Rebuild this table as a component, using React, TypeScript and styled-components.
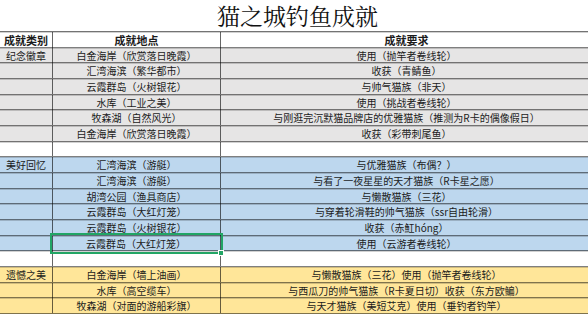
import styled, { createGlobalStyle } from "styled-components";

type Tone = "head" | "gray" | "blue" | "gold" | "blank";

type Line = {
  tone: Tone;
  cat?: string;
  place?: string;
  need?: string;
  selected?: boolean;
};

const fills: Record<Tone, string> = {
  head: "#ffffff",
  gray: "#e6e5e5",
  blue: "#bdd7ee",
  gold: "#ffe699",
  blank: "#ffffff",
};

const lines: Line[] = [
  { tone: "head", cat: "成就类别", place: "成就地点", need: "成就要求" },
  { tone: "gray", cat: "纪念徽章", place: "白金海岸（欣赏落日晚霞）", need: "使用（抛竿者卷线轮）" },
  { tone: "gray", place: "汇湾海滨（繁华都市）", need: "收获（青鲭鱼）" },
  { tone: "gray", place: "云霞群岛（火树银花）", need: "与帅气猫族（非天）" },
  { tone: "gray", place: "水库（工业之美）", need: "使用（挑战者卷线轮）" },
  { tone: "gray", place: "牧森湖（自然风光）", need: "与刚逛完沉默猫品牌店的优雅猫族（推测为R卡的偶像假日）" },
  { tone: "gray", place: "白金海岸（欣赏落日晚霞）", need: "收获（彩带刺尾鱼）" },
  { tone: "blank" },
  { tone: "blue", cat: "美好回忆", place: "汇湾海滨（游艇）", need: "与优雅猫族（布偶？）" },
  { tone: "blue", place: "汇湾海滨（游艇）", need: "与看了一夜星星的天才猫族（R卡星之愿）" },
  { tone: "blue", place: "胡湾公园（渔具商店）", need: "与懒散猫族（三花）" },
  { tone: "blue", place: "云霞群岛（大红灯笼）", need: "与穿着轮滑鞋的帅气猫族（ssr自由轮滑）" },
  { tone: "blue", place: "云霞群岛（火树银花）", need: "收获（赤魟hóng）" },
  { tone: "blue", place: "云霞群岛（大红灯笼）", need: "使用（云游者卷线轮）", selected: true },
  { tone: "blank" },
  { tone: "gold", cat: "遗憾之美", place: "白金海岸（墙上油画）", need: "与懒散猫族（三花）使用（抛竿者卷线轮）" },
  { tone: "gold", place: "水库（高空缆车）", need: "与西瓜刀的帅气猫族（R卡夏日切）收获（东方欧鳊）" },
  { tone: "gold", place: "牧森湖（对面的游船彩旗）", need: "与天才猫族（美短艾克）使用（垂钓者钓竿）" },
];

const GlobalStyle = createGlobalStyle`
  body {
    margin: 0;
    background: #ffffff;
    font-family: "Noto Sans CJK SC", "Liberation Sans", sans-serif;
  }
`;

const Page = styled.div`
  width: 588px;
  height: 316px;
  overflow: hidden;
  background: #ffffff;
`;

const Title = styled.h1`
  margin: 0;
  height: 31px;
  display: flex;
  align-items: center;
  justify-content: center;
  padding-left: 7px;
  font-family: "Noto Serif CJK SC", "Noto Sans CJK SC", serif;
  font-weight: 400;
  font-size: 23px;
  color: #111111;
`;

const Sheet = styled.div`
  width: 592px;
  border-top: 1px solid rgba(0, 0, 0, 0.55);
`;

const Row = styled.div<{ $tone: Tone }>`
  display: grid;
  grid-template-columns: 53px 168px 371px;
  height: 15.67px;
  box-sizing: border-box;
  background: ${(p) => fills[p.$tone]};
  border-bottom: 1px solid rgba(0, 0, 0, 0.5);
  box-shadow: inset 0 1px 0 rgba(0, 0, 0, 0.18);
`;

const Cell = styled.div<{ $head?: boolean; $selected?: boolean }>`
  position: relative;
  display: flex;
  align-items: center;
  justify-content: center;
  white-space: nowrap;
  font-size: ${(p) => (p.$head ? "11px" : "10px")};
  font-weight: ${(p) => (p.$head ? 700 : 400)};
  color: #1b1b1b;
  border-right: 1px solid rgba(0, 0, 0, 0.6);
  &:last-child {
    border-right: none;
  }
  ${(p) =>
    p.$selected &&
    `
    z-index: 1;
    outline: 2px solid #22a565;
    margin: -1px 0 -1px -1px;
    &::after {
      content: "";
      position: absolute;
      right: -4px;
      bottom: -4px;
      width: 4px;
      height: 4px;
      background: #22a565;
      border: 1px solid #ffffff;
    }
  `}
`;

export default function App() {
  return (
    <Page>
      <GlobalStyle />
      <Title>猫之城钓鱼成就</Title>
      <Sheet>
        {lines.map((line, i) => (
          <Row key={i} $tone={line.tone}>
            <Cell $head={line.tone === "head"}>{line.cat}</Cell>
            <Cell $head={line.tone === "head"} $selected={line.selected}>
              {line.place}
            </Cell>
            <Cell $head={line.tone === "head"}>{line.need}</Cell>
          </Row>
        ))}
      </Sheet>
    </Page>
  );
}
